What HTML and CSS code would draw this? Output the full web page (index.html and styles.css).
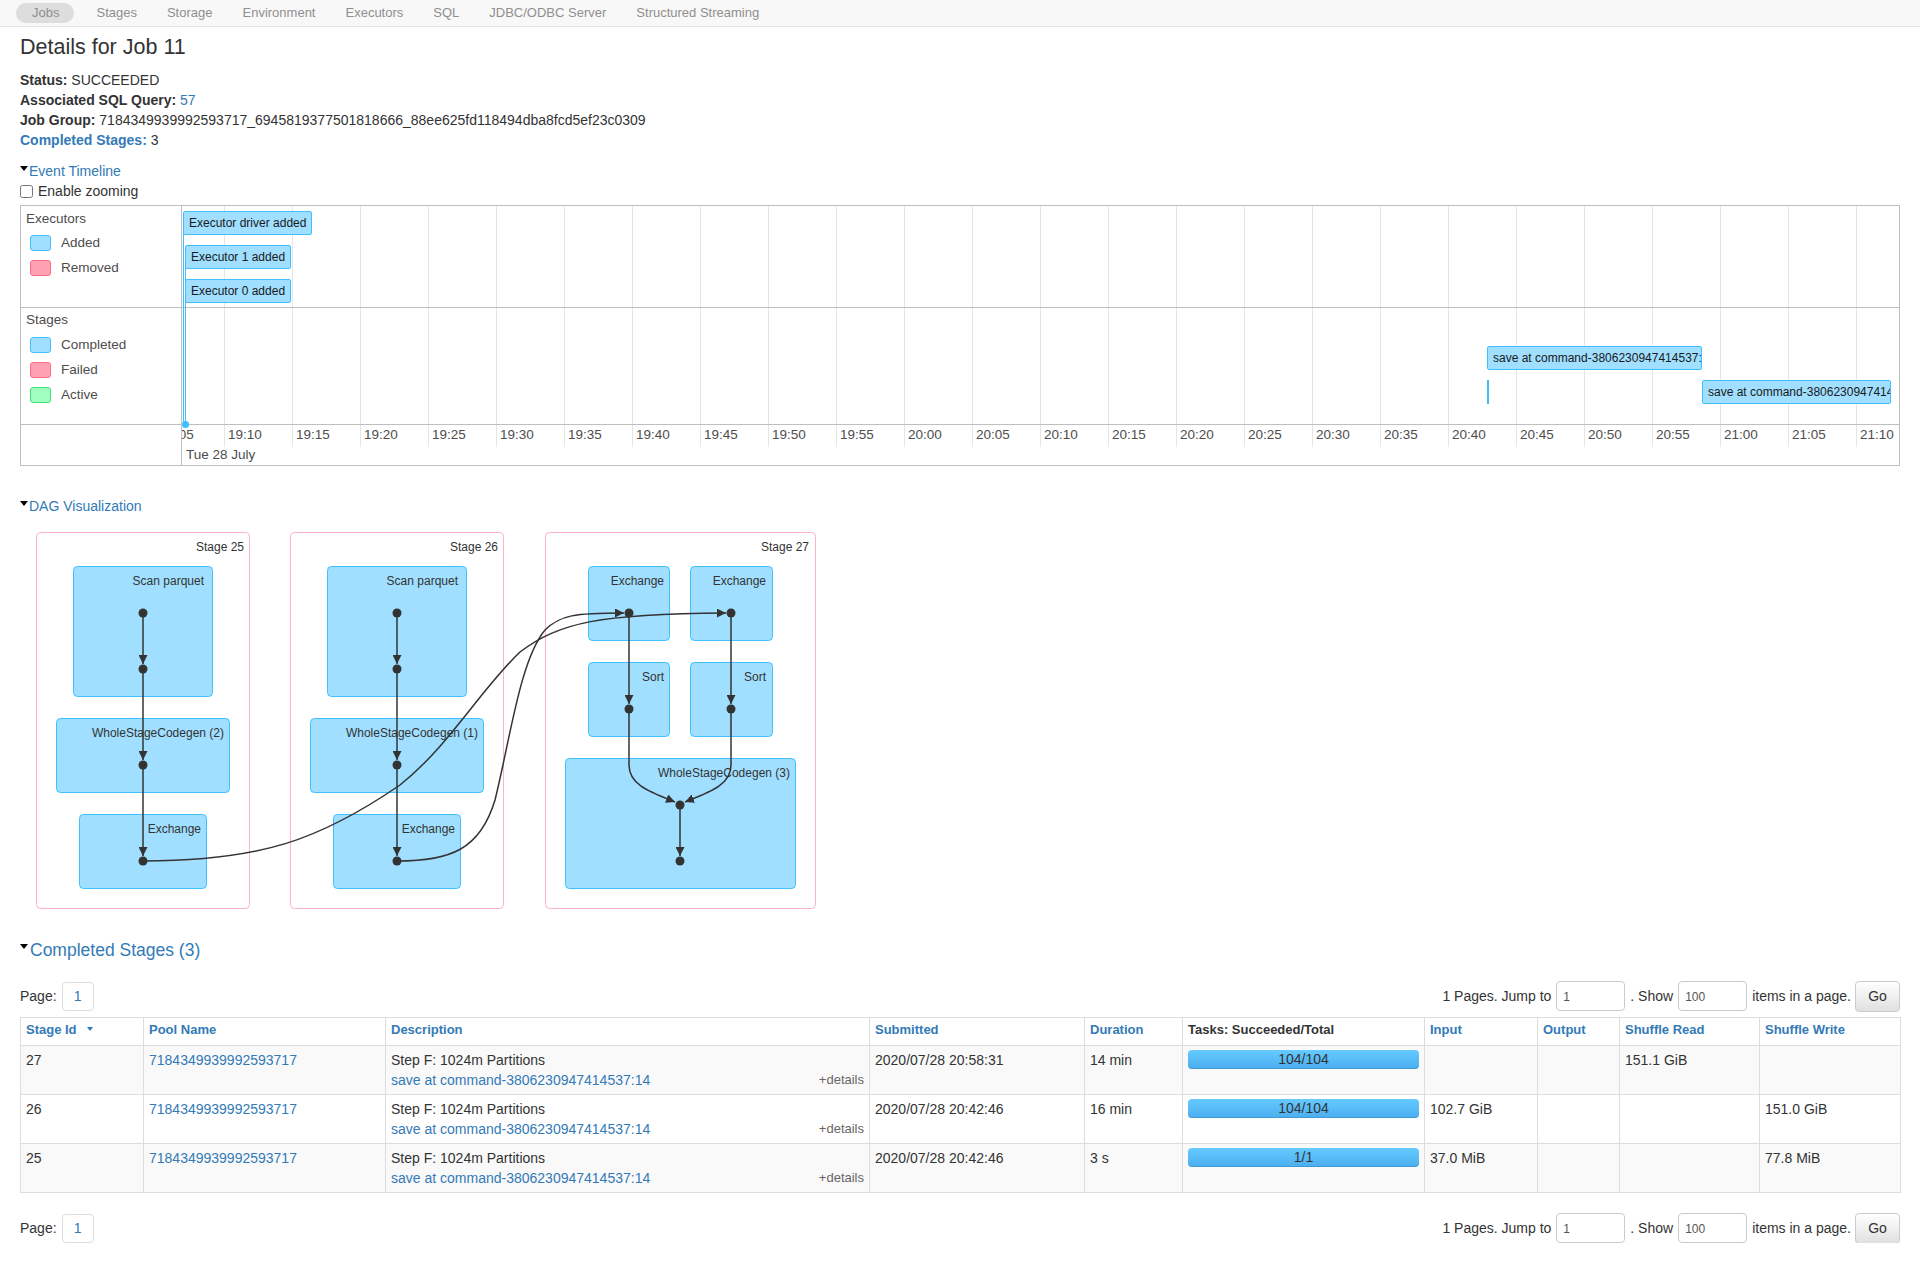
FILE: index.html
```html
<!DOCTYPE html>
<html lang="en">
<head>
<meta charset="utf-8">
<title>Details for Job 11</title>
<link rel="stylesheet" href="styles.css">
</head>
<body>
<nav class="navbar">
  <ul class="nav">
    <li class="nav-item active">Jobs</li>
    <li class="nav-item">Stages</li>
    <li class="nav-item">Storage</li>
    <li class="nav-item">Environment</li>
    <li class="nav-item">Executors</li>
    <li class="nav-item">SQL</li>
    <li class="nav-item">JDBC/ODBC Server</li>
    <li class="nav-item">Structured Streaming</li>
  </ul>
</nav>
<main class="container">
  <h3 class="title">Details for Job 11</h3>
  <ul class="summary">
    <li><strong>Status:</strong> SUCCEEDED</li>
    <li><strong>Associated SQL Query:</strong> <a href="#">57</a></li>
    <li><strong>Job Group:</strong> 7184349939992593717_6945819377501818666_88ee625fd118494dba8fcd5ef23c0309</li>
    <li><a href="#" class="strong-link">Completed Stages:</a> 3</li>
  </ul>

  <div class="toggle"><span class="arrow"></span><a href="#">Event Timeline</a></div>
  <label class="zoom"><input type="checkbox"> Enable zooming</label>

  <div class="timeline">
    <div class="tl-labels">
      <div class="tl-group tl-exec">
        <div class="tl-title">Executors</div>
        <div class="legend">
          <div class="legend-row"><span class="swatch sw-blue"></span>Added</div>
          <div class="legend-row"><span class="swatch sw-red"></span>Removed</div>
        </div>
      </div>
      <div class="tl-group tl-stages">
        <div class="tl-title">Stages</div>
        <div class="legend">
          <div class="legend-row"><span class="swatch sw-blue"></span>Completed</div>
          <div class="legend-row"><span class="swatch sw-red"></span>Failed</div>
          <div class="legend-row"><span class="swatch sw-green"></span>Active</div>
        </div>
      </div>
      <div class="tl-group tl-axis"></div>
    </div>
    <div class="tl-center">
      <div class="grid" style="left:-26px"></div>
      <div class="grid" style="left:42px"></div>
      <div class="grid" style="left:110px"></div>
      <div class="grid" style="left:178px"></div>
      <div class="grid" style="left:246px"></div>
      <div class="grid" style="left:314px"></div>
      <div class="grid" style="left:382px"></div>
      <div class="grid" style="left:450px"></div>
      <div class="grid" style="left:518px"></div>
      <div class="grid" style="left:586px"></div>
      <div class="grid" style="left:654px"></div>
      <div class="grid" style="left:722px"></div>
      <div class="grid" style="left:790px"></div>
      <div class="grid" style="left:858px"></div>
      <div class="grid" style="left:926px"></div>
      <div class="grid" style="left:994px"></div>
      <div class="grid" style="left:1062px"></div>
      <div class="grid" style="left:1130px"></div>
      <div class="grid" style="left:1198px"></div>
      <div class="grid" style="left:1266px"></div>
      <div class="grid" style="left:1334px"></div>
      <div class="grid" style="left:1402px"></div>
      <div class="grid" style="left:1470px"></div>
      <div class="grid" style="left:1538px"></div>
      <div class="grid" style="left:1606px"></div>
      <div class="grid" style="left:1674px"></div>

      <div class="hline" style="top:101px"></div>
      <div class="hline" style="top:218px"></div>

      <div class="tick" style="left:-22px">19:05</div>
      <div class="tick" style="left:46px">19:10</div>
      <div class="tick" style="left:114px">19:15</div>
      <div class="tick" style="left:182px">19:20</div>
      <div class="tick" style="left:250px">19:25</div>
      <div class="tick" style="left:318px">19:30</div>
      <div class="tick" style="left:386px">19:35</div>
      <div class="tick" style="left:454px">19:40</div>
      <div class="tick" style="left:522px">19:45</div>
      <div class="tick" style="left:590px">19:50</div>
      <div class="tick" style="left:658px">19:55</div>
      <div class="tick" style="left:726px">20:00</div>
      <div class="tick" style="left:794px">20:05</div>
      <div class="tick" style="left:862px">20:10</div>
      <div class="tick" style="left:930px">20:15</div>
      <div class="tick" style="left:998px">20:20</div>
      <div class="tick" style="left:1066px">20:25</div>
      <div class="tick" style="left:1134px">20:30</div>
      <div class="tick" style="left:1202px">20:35</div>
      <div class="tick" style="left:1270px">20:40</div>
      <div class="tick" style="left:1338px">20:45</div>
      <div class="tick" style="left:1406px">20:50</div>
      <div class="tick" style="left:1474px">20:55</div>
      <div class="tick" style="left:1542px">21:00</div>
      <div class="tick" style="left:1610px">21:05</div>
      <div class="tick" style="left:1678px">21:10</div>
      <div class="date">Tue 28 July</div>

      <div class="tl-line" style="left:1px;top:28px;height:190px"></div>
      <div class="tl-line" style="left:3px;top:62px;height:156px"></div>
      <div class="tl-dot"></div>

      <div class="tl-item" style="left:1px;top:5px">Executor driver added</div>
      <div class="tl-item" style="left:3px;top:39px">Executor 1 added</div>
      <div class="tl-item" style="left:3px;top:73px">Executor 0 added</div>

      <div class="tl-item" style="left:1305px;top:140px;width:215px">save at command-3806230947414537:14</div>
      <div class="tl-item" style="left:1520px;top:174px;width:189px">save at command-3806230947414537:14</div>
      <div class="tl-thin" style="left:1305px;top:174px"></div>
    </div>
  </div>

  <div class="toggle dag-toggle"><span class="arrow"></span><a href="#">DAG Visualization</a></div>

  <svg class="dag" viewBox="20 520 800 400" width="800" height="400" xmlns="http://www.w3.org/2000/svg">
    <defs>
      <marker id="arr" viewBox="0 0 10 10" refX="10" refY="5" markerWidth="9" markerHeight="9" markerUnits="userSpaceOnUse" orient="auto">
        <path d="M0,0 L10,5 L0,10 Z" fill="#333"/>
      </marker>
    </defs>
    <g class="clusters">
      <rect x="36.5" y="532.5" width="213" height="376" rx="4"/>
      <rect x="290.5" y="532.5" width="213" height="376" rx="4"/>
      <rect x="545.5" y="532.5" width="270" height="376" rx="4"/>
    </g>
    <g class="cl-labels">
      <text x="244" y="551">Stage 25</text>
      <text x="498" y="551">Stage 26</text>
      <text x="809" y="551">Stage 27</text>
    </g>
    <g class="nodes">
      <rect x="73.5" y="566.5" width="139" height="130" rx="4"/>
      <rect x="56.5" y="718.5" width="173" height="74" rx="4"/>
      <rect x="79.5" y="814.5" width="127" height="74" rx="4"/>
      <rect x="327.5" y="566.5" width="139" height="130" rx="4"/>
      <rect x="310.5" y="718.5" width="173" height="74" rx="4"/>
      <rect x="333.5" y="814.5" width="127" height="74" rx="4"/>
      <rect x="588.5" y="566.5" width="81" height="74" rx="4"/>
      <rect x="690.5" y="566.5" width="82" height="74" rx="4"/>
      <rect x="588.5" y="662.5" width="81" height="74" rx="4"/>
      <rect x="690.5" y="662.5" width="82" height="74" rx="4"/>
      <rect x="565.5" y="758.5" width="230" height="130" rx="4"/>
    </g>
    <g class="node-labels">
      <text x="204" y="585">Scan parquet</text>
      <text x="224" y="737">WholeStageCodegen (2)</text>
      <text x="201" y="833">Exchange</text>
      <text x="458" y="585">Scan parquet</text>
      <text x="478" y="737">WholeStageCodegen (1)</text>
      <text x="455" y="833">Exchange</text>
      <text x="664" y="585">Exchange</text>
      <text x="766" y="585">Exchange</text>
      <text x="664" y="681">Sort</text>
      <text x="766" y="681">Sort</text>
      <text x="790" y="777">WholeStageCodegen (3)</text>
    </g>
    <g class="edges">
      <path d="M143,613 V664" marker-end="url(#arr)"/>
      <path d="M143,669 V760" marker-end="url(#arr)"/>
      <path d="M143,765 V856" marker-end="url(#arr)"/>
      <path d="M397,613 V664" marker-end="url(#arr)"/>
      <path d="M397,669 V760" marker-end="url(#arr)"/>
      <path d="M397,765 V856" marker-end="url(#arr)"/>
      <path d="M629,613 V704" marker-end="url(#arr)"/>
      <path d="M731,613 V704" marker-end="url(#arr)"/>
      <path d="M629,709 V765 C629,785 650,792 675,802" marker-end="url(#arr)"/>
      <path d="M731,709 V765 C731,785 710,792 685,802" marker-end="url(#arr)"/>
      <path d="M680,805 V856" marker-end="url(#arr)"/>
      <path d="M143,861 C260,861 320,840 400,785 C450,745 480,690 520,652 C560,622 600,614 726,613" marker-end="url(#arr)"/>
      <path d="M397,861 C450,861 480,850 495,800 C510,740 520,660 545,630 C560,615 575,613 624,613" marker-end="url(#arr)"/>
    </g>
    <g class="dots">
      <circle cx="143" cy="613" r="4.5"/>
      <circle cx="143" cy="669" r="4.5"/>
      <circle cx="143" cy="765" r="4.5"/>
      <circle cx="143" cy="861" r="4.5"/>
      <circle cx="397" cy="613" r="4.5"/>
      <circle cx="397" cy="669" r="4.5"/>
      <circle cx="397" cy="765" r="4.5"/>
      <circle cx="397" cy="861" r="4.5"/>
      <circle cx="629" cy="613" r="4.5"/>
      <circle cx="731" cy="613" r="4.5"/>
      <circle cx="629" cy="709" r="4.5"/>
      <circle cx="731" cy="709" r="4.5"/>
      <circle cx="680" cy="805" r="4.5"/>
      <circle cx="680" cy="861" r="4.5"/>
    </g>
  </svg>

  <h4 class="section"><span class="arrow"></span><a href="#">Completed Stages (3)</a></h4>

  <div class="paging">
    <div class="page-left">Page: <span class="page-box">1</span></div>
    <div class="page-right">
      <span>1 Pages. Jump to</span>
      <span class="inp">1</span>
      <span>. Show</span>
      <span class="inp">100</span>
      <span>items in a page.</span>
      <span class="btn">Go</span>
    </div>
  </div>

  <table class="stage-table">
    <colgroup>
      <col style="width:123px"><col style="width:242px"><col style="width:484px"><col style="width:215px"><col style="width:98px">
      <col style="width:242px"><col style="width:113px"><col style="width:82px"><col style="width:140px"><col style="width:141px">
    </colgroup>
    <thead>
      <tr>
        <th><a href="#">Stage Id</a><span class="caret"></span></th>
        <th><a href="#">Pool Name</a></th>
        <th><a href="#">Description</a></th>
        <th><a href="#">Submitted</a></th>
        <th><a href="#">Duration</a></th>
        <th class="plain">Tasks: Succeeded/Total</th>
        <th><a href="#">Input</a></th>
        <th><a href="#">Output</a></th>
        <th><a href="#">Shuffle Read</a></th>
        <th><a href="#">Shuffle Write</a></th>
      </tr>
    </thead>
    <tbody>
      <tr class="odd">
        <td>27</td>
        <td><a href="#">7184349939992593717</a></td>
        <td><div>Step F: 1024m Partitions</div><div><span class="details">+details</span><a href="#">save at command-3806230947414537:14</a></div></td>
        <td>2020/07/28 20:58:31</td>
        <td>14 min</td>
        <td><div class="progress">104/104</div></td>
        <td></td>
        <td></td>
        <td>151.1 GiB</td>
        <td></td>
      </tr>
      <tr>
        <td>26</td>
        <td><a href="#">7184349939992593717</a></td>
        <td><div>Step F: 1024m Partitions</div><div><span class="details">+details</span><a href="#">save at command-3806230947414537:14</a></div></td>
        <td>2020/07/28 20:42:46</td>
        <td>16 min</td>
        <td><div class="progress">104/104</div></td>
        <td>102.7 GiB</td>
        <td></td>
        <td></td>
        <td>151.0 GiB</td>
      </tr>
      <tr class="odd">
        <td>25</td>
        <td><a href="#">7184349939992593717</a></td>
        <td><div>Step F: 1024m Partitions</div><div><span class="details">+details</span><a href="#">save at command-3806230947414537:14</a></div></td>
        <td>2020/07/28 20:42:46</td>
        <td>3 s</td>
        <td><div class="progress">1/1</div></td>
        <td>37.0 MiB</td>
        <td></td>
        <td></td>
        <td>77.8 MiB</td>
      </tr>
    </tbody>
  </table>

  <div class="paging paging-bottom">
    <div class="page-left">Page: <span class="page-box">1</span></div>
    <div class="page-right">
      <span>1 Pages. Jump to</span>
      <span class="inp">1</span>
      <span>. Show</span>
      <span class="inp">100</span>
      <span>items in a page.</span>
      <span class="btn">Go</span>
    </div>
  </div>
</main>
</body>
</html>
```

FILE: styles.css
```css
* { box-sizing: border-box; }
html, body { margin: 0; padding: 0; background: #fff; }
body {
  font-family: "Liberation Sans", Arial, Helvetica, sans-serif;
  font-size: 14px;
  line-height: 20px;
  color: #333;
}
a { color: #337ab7; text-decoration: none; }

/* navbar */
.navbar {
  height: 27px;
  background: #f8f8f8;
  border-bottom: 1px solid #e5e5e5;
}
.nav {
  display: flex;
  align-items: center;
  height: 26px;
  margin: 0;
  padding: 0 0 0 16px;
  list-style: none;
  font-size: 13px;
  color: #8f8f8f;
}
.nav-item { padding: 0 15px; line-height: 20px; }
.nav-item.active {
  background: #dddddd;
  border-radius: 10px;
  padding: 0 15px 0 16px;
  margin-right: 7px;
  color: #8f8f8f;
}

/* page */
.container { padding: 0 20px; }
.title {
  margin: 5px 0 0;
  font-size: 21.5px;
  line-height: 30px;
  font-weight: normal;
  color: #333;
}
.summary { margin: 8px 0 0; padding: 0; list-style: none; }
.strong-link { font-weight: bold; }

.toggle { margin-top: 11px; height: 20px; }
.arrow {
  display: inline-block;
  width: 0; height: 0;
  border-left: 4px solid transparent;
  border-right: 4px solid transparent;
  border-top: 5px solid #000;
  vertical-align: 5px;
  margin-right: 1px;
}
.zoom { display: flex; align-items: center; height: 20px; }
.zoom input { margin: 0 5px 0 0; width: 13px; height: 13px; }

/* timeline */
.timeline {
  margin-top: 4px;
  border: 1px solid #bfbfbf;
  display: flex;
  height: 261px;
  color: #4d4d4d;
  font-size: 13.5px;
}
.tl-labels {
  width: 161px;
  border-right: 1px solid #bfbfbf;
  display: flex;
  flex-direction: column;
}
.tl-group { padding: 0 5px; }
.tl-exec { height: 102px; border-bottom: 1px solid #bfbfbf; padding-top: 4px; }
.tl-stages { height: 117px; border-bottom: 1px solid #bfbfbf; padding-top: 3px; }
.tl-axis { flex: 1; }
.tl-title { line-height: 18px; }
.legend { margin-top: 2px; }
.tl-stages .legend { margin-top: 3px; }
.legend-row { display: flex; align-items: center; height: 25px; }
.swatch {
  width: 21px; height: 16px;
  margin: 0 10px 0 4px;
  border-radius: 3px;
  border: 1px solid;
}
.sw-blue { background: #a0dfff; border-color: #3ec0ff; }
.sw-red { background: #ffa1b0; border-color: #ff6d85; }
.sw-green { background: #a0ffc0; border-color: #40e07a; }

.tl-center { flex: 1; position: relative; overflow: hidden; }
.grid { position: absolute; top: 0; width: 1px; height: 241px; background: #e5e5e5; }
.hline { position: absolute; left: 0; right: 0; height: 1px; background: #bfbfbf; }
.tick { position: absolute; top: 221px; line-height: 16px; white-space: nowrap; }
.date { position: absolute; top: 241px; left: 4px; line-height: 16px; white-space: nowrap; }
.tl-line { position: absolute; width: 1px; background: #3ec0ff; }
.tl-dot {
  position: absolute; left: 0; top: 215px;
  width: 7px; height: 7px; border-radius: 50%;
  background: #3ec0ff;
}
.tl-item {
  position: absolute;
  height: 24px;
  background: #a0dfff;
  border: 1px solid #3ec0ff;
  border-radius: 2px;
  padding: 0 5px;
  font-size: 12px;
  line-height: 22px;
  color: #1a1a1a;
  white-space: nowrap;
  overflow: hidden;
}
.tl-thin { position: absolute; width: 2px; height: 24px; background: #3ec0ff; }

/* dag */
.dag-toggle { margin-top: 30px; }
.dag { display: block; margin-top: 4px; }
.clusters rect { fill: #fff; stroke: #ffb3c2; stroke-width: 1; }
.nodes rect { fill: #a0dfff; stroke: #3ec0ff; stroke-width: 1; }
.dag text {
  font-family: "Liberation Sans", Arial, sans-serif;
  font-size: 12px;
  fill: #333;
  text-anchor: end;
}
.edges path { fill: none; stroke: #333; stroke-width: 1.5; }
.dots circle { fill: #333; }

/* completed stages */
.section {
  margin: 20px 0 0;
  font-size: 17.5px;
  line-height: 20px;
  font-weight: normal;
}
.section .arrow { vertical-align: 7px; margin-right: 2px; }

.paging {
  margin-top: 21px;
  height: 30px;
  display: flex;
  align-items: center;
  justify-content: space-between;
}
.paging-bottom { margin-top: 20px; }
.page-left { display: flex; align-items: center; }
.page-box {
  display: inline-block;
  width: 32px; height: 29px;
  margin-left: 5px;
  border: 1px solid #ddd;
  border-radius: 4px;
  text-align: center;
  line-height: 27px;
  color: #337ab7;
}
.page-right { display: flex; align-items: center; gap: 5px; }
.inp {
  display: inline-block;
  width: 69px; height: 30px;
  border: 1px solid #ccc;
  border-radius: 4px;
  padding: 0 6px;
  font-size: 12px;
  line-height: 30px;
  color: #555;
}
.btn {
  display: inline-block;
  width: 45px; height: 31px;
  margin-left: -1px;
  border: 1px solid #ccc;
  border-radius: 4px;
  background: linear-gradient(#ffffff, #e0e0e0);
  text-align: center;
  line-height: 29px;
  color: #333;
}

.stage-table {
  margin-top: 6px;
  width: 1880px;
  border-collapse: collapse;
  table-layout: fixed;
  border: 1px solid #ddd;
}
.stage-table th, .stage-table td {
  border: 1px solid #ddd;
  text-align: left;
  vertical-align: top;
}
.stage-table th {
  padding: 3px 5px 6px;
  font-size: 13px;
  line-height: 18px;
  font-weight: bold;
}
.stage-table th.plain { color: #333; }
.stage-table td { padding: 4px 5px 4px; height: 48px; }
.stage-table tr.odd td { background: #f9f9f9; }
.caret {
  display: inline-block;
  width: 0; height: 0;
  margin-left: 10px;
  border-left: 3px solid transparent;
  border-right: 3px solid transparent;
  border-top: 4px solid #337ab7;
  vertical-align: 3px;
}
.details { float: right; font-size: 13px; color: #666; }
.progress {
  height: 19px;
  border-radius: 4px;
  background: linear-gradient(#66caff, #4aaef0);
  box-shadow: inset 0 -1px 0 rgba(0, 0, 0, 0.12);
  text-align: center;
  line-height: 19px;
  color: #333;
}
```
